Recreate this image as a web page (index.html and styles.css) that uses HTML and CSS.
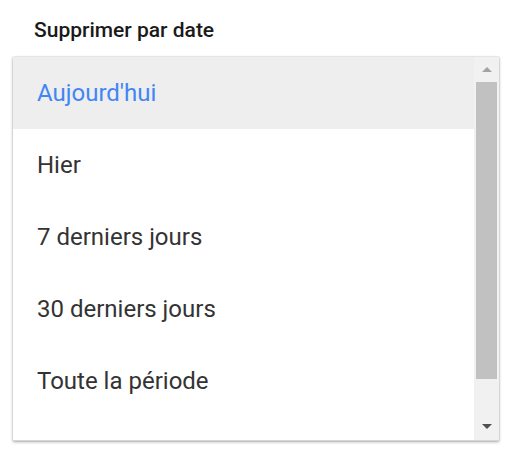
FILE: index.html
```html
<!DOCTYPE html>
<html>

<head>
    <meta charset="UTF-8">
    <title>Supprimer par date</title>
    <link rel="stylesheet" href="styles.css">
</head>

<body>
    <h3 class="title">Supprimer par date</h3>
    <div class="panel">
        <ul class="list">
            <li class="active">Aujourd'hui</li>
            <li>Hier</li>
            <li>7 derniers jours</li>
            <li>30 derniers jours</li>
            <li>Toute la période</li>
        </ul>
        <div class="bar">
            <span class="up"></span>
            <span class="thumb"></span>
            <span class="down"></span>
        </div>
    </div>
</body>

</html>
```

FILE: styles.css
```css
* {
    margin: 0;
    padding: 0;
}

body {
    background-color: #fff;
    font-family: Roboto, "Liberation Sans", sans-serif;
    padding: 16px 0 11px 13px;
}

.title {
    font-size: 21px;
    font-weight: 500;
    color: #1a1a1a;
    line-height: 28px;
    padding-left: 21px;
    margin-bottom: 13px;
}

.panel {
    display: flex;
    width: 486px;
    height: 383px;
    background-color: #fff;
    border-bottom: 1px solid #d6d6d6;
    box-shadow: 0 1px 3px rgba(0, 0, 0, 0.3), 0 0 1px rgba(0, 0, 0, 0.3);
    overflow: hidden;
}

.list {
    flex: 1;
    list-style: none;
}

.list li {
    height: 72px;
    display: flex;
    align-items: center;
    padding-left: 24px;
    font-size: 24px;
    color: #333;
}

.list .active {
    background-color: #eee;
    color: #4285f4;
}

.bar {
    width: 25px;
    background-color: #f1f1f1;
    display: flex;
    flex-direction: column;
    align-items: center;
}

.bar .up,
.bar .down {
    width: 0;
    height: 0;
    border-left: 5px solid transparent;
    border-right: 5px solid transparent;
}

.bar .up {
    border-bottom: 5px solid #a3a3a3;
    margin-top: 10px;
}

.bar .down {
    border-top: 5px solid #505050;
    margin-top: auto;
    margin-bottom: 11px;
}

.bar .thumb {
    width: 21px;
    height: 297px;
    background-color: #c1c1c1;
    margin-top: 10px;
}
```
